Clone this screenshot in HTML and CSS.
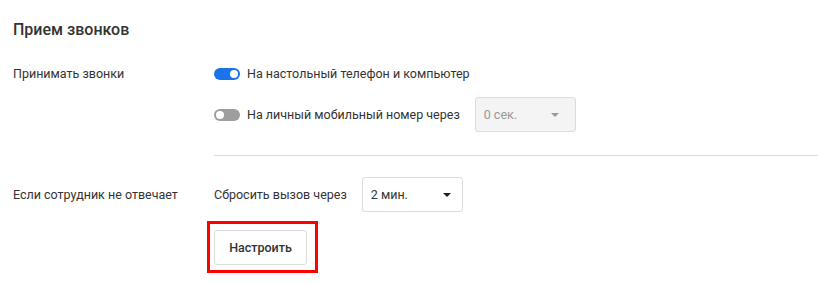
FILE: index.html
```html
<!DOCTYPE html>
<html lang="ru">
<head>
    <meta charset="UTF-8">
    <meta name="viewport" content="width=device-width, initial-scale=1.0">
    <title>Прием звонков</title>
    <link rel="stylesheet" href="styles.css">
</head>
<body>
    <h2 class="section-title">Прием звонков</h2>

    <!-- Принимать звонки -->
    <div class="setting">
        <div class="setting-label">Принимать звонки</div>
        <div class="setting-body">
            <div class="option">
                <span class="toggle toggle-on"></span>
                <span class="option-text">На настольный телефон и компьютер</span>
            </div>
            <div class="option">
                <span class="toggle"></span>
                <span class="option-text">На личный мобильный номер через</span>
                <div class="select select-disabled">
                    <span>0 сек.</span>
                    <span class="caret"></span>
                </div>
            </div>
        </div>
    </div>

    <div class="divider"></div>

    <!-- Если не отвечает -->
    <div class="setting">
        <div class="setting-label">Если сотрудник не отвечает</div>
        <div class="setting-body">
            <div class="option">
                <span class="option-text">Сбросить вызов через</span>
                <div class="select">
                    <span>2 мин.</span>
                    <span class="caret"></span>
                </div>
            </div>
            <div class="highlight">
                <button class="btn">Настроить</button>
            </div>
        </div>
    </div>
</body>
</html>
```

FILE: styles.css
```css
body {
    margin: 0;
    padding: 0 0 0 13px;
    background-color: #fff;
    font-family: Roboto, 'Liberation Sans', sans-serif;
    font-size: 12.5px;
    color: #333;
}

.section-title {
    margin: 20px 0 16px;
    font-size: 16px;
    line-height: 20px;
    font-weight: 500;
    color: #333;
}

.setting {
    display: grid;
    grid-template-columns: 201px 1fr;
}

.setting-label {
    height: 35px;
    line-height: 35px;
}

.setting-body {
    display: flex;
    flex-direction: column;
    gap: 6px;
}

.option {
    display: flex;
    align-items: center;
    height: 35px;
}

.option-text {
    margin-right: 15px;
}

/* Переключатель */
.toggle {
    position: relative;
    width: 26px;
    height: 12px;
    margin-right: 7px;
    border-radius: 6px;
    background-color: #9e9e9e;
}

.toggle::after {
    content: '';
    position: absolute;
    top: 2px;
    left: 2px;
    width: 8px;
    height: 8px;
    border-radius: 50%;
    background-color: #fff;
}

.toggle-on {
    background-color: #1a73e8;
}

.toggle-on::after {
    left: 16px;
}

.select {
    display: flex;
    align-items: center;
    justify-content: space-between;
    box-sizing: border-box;
    width: 101px;
    height: 35px;
    padding: 0 11px 0 8px;
    border: 1px solid #dcdcdc;
    border-radius: 3px;
    background-color: #fff;
}

.select-disabled {
    padding-right: 16px;
    background-color: #f3f4f3;
    color: #999;
}

.caret {
    width: 0;
    height: 0;
    border-left: 4px solid transparent;
    border-right: 4px solid transparent;
    border-top: 4px solid #222;
}

.select-disabled .caret {
    border-top-color: #999;
}

.divider {
    height: 1px;
    margin: 23px 0 21px 201px;
    background-color: #dcdcdc;
}

.highlight {
    align-self: flex-start;
    margin: 3px 0 0 -7px;
    padding: 6px 8px 5px 4px;
    border: 3px solid #f00;
}

.btn {
    display: block;
    width: 93px;
    height: 35px;
    padding: 0;
    border: 1px solid #dcdcdc;
    border-radius: 3px;
    background-color: #fff;
    font-family: inherit;
    font-size: 12.5px;
    font-weight: 500;
    color: #333;
}
```
